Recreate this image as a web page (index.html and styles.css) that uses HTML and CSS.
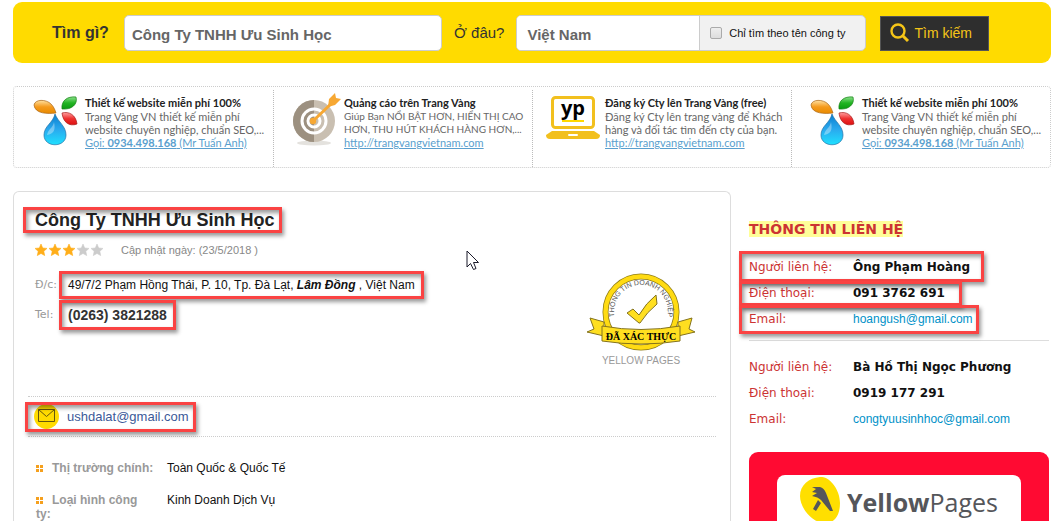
FILE: index.html
```html
<!DOCTYPE html>
<html lang="vi">
<head>
<meta charset="utf-8">
<meta name="viewport" content="width=device-width, initial-scale=1">
<title>Công Ty TNHH Ưu Sinh Học</title>
<link rel="stylesheet" href="styles.css">
</head>
<body>
<svg class="defs" aria-hidden="true">
  <defs>
    <linearGradient id="blue" x1="0" y1="0" x2="0" y2="1"><stop offset="0" stop-color="#0b7fd0"/><stop offset=".5" stop-color="#2aa9ee"/><stop offset="1" stop-color="#1fe0ff"/></linearGradient>
    <linearGradient id="orange" x1="0" y1="0" x2="0" y2="1"><stop offset="0" stop-color="#ffe0a0"/><stop offset=".5" stop-color="#f59a1c"/><stop offset="1" stop-color="#e88a00"/></linearGradient>
    <linearGradient id="green" x1="0" y1="0" x2="0" y2="1"><stop offset="0" stop-color="#8be08b"/><stop offset=".5" stop-color="#22b422"/><stop offset="1" stop-color="#0a9a12"/></linearGradient>
    <linearGradient id="red" x1="0" y1="0" x2="0" y2="1"><stop offset="0" stop-color="#ffa0a0"/><stop offset=".5" stop-color="#ee3030"/><stop offset="1" stop-color="#dd1010"/></linearGradient>
  </defs>
  <symbol id="drops" viewBox="0 0 46 52">
    <path d="M1 9C2 3 13 3 18 8C21 11 22 14 23 17C15 18 2 18 1 9Z" fill="url(#orange)" stroke="#a9671b" stroke-width=".7"/>
    <path d="M29 13C28 5 34 0 43 1C45 8 39 14 29 13Z" fill="url(#green)" stroke="#158015" stroke-width=".7"/>
    <path d="M29 17C36 15 43 19 44 28C36 31 30 26 29 17Z" fill="url(#red)" stroke="#a71b1b" stroke-width=".7"/>
    <path d="M22 18C25 26 33 30 33 39C33 52 11 52 11 39C11 30 20 27 22 18Z" fill="url(#blue)" stroke="#2371a6" stroke-width=".7"/>
    <path d="M21 26C20 32 15 33 14 39C20 38 23 35 21 26Z" fill="#fff" opacity=".35"/>
  </symbol>
  <symbol id="star" viewBox="0 0 12 12"><path d="M6 0L7.700 4L12 4.400L8.800 7.300L9.700 11.600L6 9.400L2.300 11.600L3.200 7.300L0 4.400L4.300 4Z" fill="currentColor" stroke="currentColor" stroke-width=".6"/></symbol>
</svg>

<form class="search">
  <label class="search-label search-label-bold" for="what">Tìm gì?</label>
  <input class="field field-what" id="what" type="text" value="Công Ty TNHH Ưu Sinh Học">
  <label class="search-label" for="where">Ở đâu?</label>
  <div class="where-group">
    <input class="field-where" id="where" type="text" value="Việt Nam">
    <label class="only-name"><input class="tick" type="checkbox">Chỉ tìm theo tên công ty</label>
  </div>
  <button class="search-button" type="submit">
    <svg width="20" height="20" viewBox="0 0 20 20" fill="none" stroke="#f5c518"><circle cx="8" cy="8" r="6.500" stroke-width="2.400"/><path d="M12.500 12.500L18 18" stroke-width="3"/></svg>
    Tìm kiếm
  </button>
</form>

<section class="ads">
  <article class="ad">
    <svg class="ad-icon" viewBox="0 0 46 52"><use href="#drops"/></svg>
    <div class="ad-text">
      <h2 class="ad-title">Thiết kế website miễn phí 100%</h2>
      <p class="ad-copy">Trang Vàng VN thiết kế miễn phí<br>website chuyên nghiệp, chuẩn SEO,...</p>
      <a class="ad-link" href="#">Gọi: <b>0934.498.168</b> (Mr Tuấn Anh)</a>
    </div>
  </article>
  <article class="ad">
    <svg class="ad-icon ad-icon-target" viewBox="0 0 50 54">
      <ellipse cx="22" cy="50" rx="17" ry="2.500" fill="#e4e2de"/>
      <circle cx="22" cy="28" r="21" fill="#c9bfb1"/><path d="M22 7A21 21 0 0 0 22 49Z" fill="#9c9080"/>
      <circle cx="22" cy="28" r="12" fill="none" stroke="#fff" stroke-width="3"/>
      <circle cx="22" cy="28" r="6" fill="none" stroke="#fff" stroke-width="3"/>
      <path d="M21 28L42 8" stroke="#f7a833" stroke-width="3"/><circle cx="21" cy="28" r="3.200" fill="#f7a833"/>
      <path d="M36 14L37 6L43 0L44 5L49 6L43 12L36 14Z" fill="#f7a833"/>
    </svg>
    <div class="ad-text">
      <h2 class="ad-title">Quảng cáo trên Trang Vàng</h2>
      <p class="ad-copy ad-copy-caps">Giúp Bạn NỔI BẬT HƠN, HIỂN THỊ CAO<br>HƠN, THU HÚT KHÁCH HÀNG HƠN,...</p>
      <a class="ad-link" href="#">http://trangvangvietnam.com</a>
    </div>
  </article>
  <article class="ad">
    <svg class="ad-icon ad-icon-laptop" viewBox="0 0 54 44">
      <rect x="6.500" y="1.500" width="41" height="30" rx="3" fill="#fff" stroke="#f2c01e" stroke-width="3"/>
      <path d="M0 39L6 35H48L54 39Q54 43 50 43H4Q0 43 0 39Z" fill="#f2c01e"/><rect x="22" y="38" width="10" height="2" rx="1" fill="#fff"/>
      <text class="laptop-text" x="27" y="19" text-anchor="middle">yp</text><path d="M16 25H38" stroke="#ffd800" stroke-width="2"/>
    </svg>
    <div class="ad-text">
      <h2 class="ad-title">Đăng ký Cty lên Trang Vàng (free)</h2>
      <p class="ad-copy">Đăng ký Cty lên trang vàng để Khách<br>hàng và đối tác tìm đến cty của bạn.</p>
      <a class="ad-link" href="#">http://trangvangvietnam.com</a>
    </div>
  </article>
  <article class="ad">
    <svg class="ad-icon" viewBox="0 0 46 52"><use href="#drops"/></svg>
    <div class="ad-text">
      <h2 class="ad-title">Thiết kế website miễn phí 100%</h2>
      <p class="ad-copy">Trang Vàng VN thiết kế miễn phí<br>website chuyên nghiệp, chuẩn SEO,...</p>
      <a class="ad-link" href="#">Gọi: <b>0934.498.168</b> (Mr Tuấn Anh)</a>
    </div>
  </article>
</section>

<main class="content">
  <section class="company">
    <div class="overview">
      <div class="details">
        <h1 class="name"><span class="mark mark-name">Công Ty TNHH Ưu Sinh Học</span></h1>
        <div class="rating">
          <span class="stars" role="img" aria-label="3/5">
            <svg class="star"><use href="#star"/></svg><svg class="star"><use href="#star"/></svg><svg class="star"><use href="#star"/></svg><svg class="star star-off"><use href="#star"/></svg><svg class="star star-off"><use href="#star"/></svg>
          </span>
          <span class="updated">Cập nhật ngày: (23/5/2018 )</span>
        </div>
        <dl class="facts">
          <dt class="fact-label">Đ/c:</dt>
          <dd class="fact"><span class="mark mark-fact">49/7/2 Phạm Hồng Thái, P. 10, Tp. Đà Lạt, <b><i>Lâm Đồng</i></b> , Việt Nam</span></dd>
          <dt class="fact-label">Tel:</dt>
          <dd class="fact fact-phone"><span class="mark mark-fact">(0263) 3821288</span></dd>
        </dl>
      </div>
      <figure class="badge">
        <svg width="110" height="80" viewBox="0 0 110 80">
          <circle cx="55" cy="39" r="35.500" fill="#fff" stroke="#8f7d18" stroke-width="6"/>
          <circle cx="55" cy="39" r="35.500" fill="none" stroke="#ffdb13" stroke-width="4.500"/>
          <path id="arc" d="M28.500 44A27 27 0 1 1 81.500 44" fill="none"/>
          <text class="arc-text"><textPath href="#arc" startOffset="50%" text-anchor="middle">THÔNG TIN DOANH NGHIỆP</textPath></text>
          <g fill="#ffdf20" stroke="#84731d">
            <path d="M18 49L4 45L8 56L1 59L18 63ZM92 49L106 45L103 56L109 59L92 63Z"/>
            <path d="M16 53Q55 60 94 53V68Q55 74 16 68Z"/>
            <path d="M41 40L47 36L53 42Q60 30 70 22L71 31Q61 39 54 50L53 50Z"/>
          </g>
          <text class="badge-text" x="55" y="67" text-anchor="middle">ĐÃ XÁC THỰC</text>
        </svg>
        <figcaption class="badge-caption">YELLOW PAGES</figcaption>
      </figure>
    </div>
    <div class="mail">
      <span class="mark mark-mail">
        <svg width="25" height="25" viewBox="0 0 25 25"><circle cx="12.500" cy="12.500" r="12.500" fill="#ffdb00"/><path d="M4.500 5.500H20.500V17.500H4.500ZM4.500 5.500L12.500 12.500L20.500 5.500" fill="none" stroke="#66570c"/></svg>
        <a class="mail-link" href="#">ushdalat@gmail.com</a>
      </span>
    </div>
    <table class="profile">
      <tr><th class="profile-label" scope="row"><span class="bullet"></span>Thị trường chính:</th><td class="profile-value">Toàn Quốc &amp; Quốc Tế</td></tr>
      <tr><th class="profile-label" scope="row"><span class="bullet"></span>Loại hình công ty:</th><td class="profile-value">Kinh Doanh Dịch Vụ</td></tr>
    </table>
    <svg class="cursor" width="14" height="21" viewBox="0 0 14 21"><path d="M1 1V17L4.500 13.500L7.500 19.500L10 18.500L7.500 12.500H12.500Z" fill="#fff" stroke="#1b1b2b"/></svg>
  </section>

  <aside class="side">
    <h2 class="side-title"><span class="highlight">THÔNG TIN LIÊN HỆ</span></h2>
    <dl class="contact">
      <div class="contact-row mark mark-person"><dt class="contact-label">Người liên hệ:</dt><dd class="contact-value">Ông Phạm Hoàng</dd></div>
      <div class="contact-row mark mark-phone"><dt class="contact-label">Điện thoại:</dt><dd class="contact-value">091 3762 691</dd></div>
      <div class="contact-row mark mark-email"><dt class="contact-label">Email:</dt><dd class="contact-value"><a class="contact-link" href="#">hoangush@gmail.com</a></dd></div>
    </dl>
    <dl class="contact contact-next">
      <div class="contact-row"><dt class="contact-label">Người liên hệ:</dt><dd class="contact-value">Bà Hồ Thị Ngọc Phương</dd></div>
      <div class="contact-row"><dt class="contact-label">Điện thoại:</dt><dd class="contact-value">0919 177 291</dd></div>
      <div class="contact-row"><dt class="contact-label">Email:</dt><dd class="contact-value"><a class="contact-link" href="#">congtyuusinhhoc@gmail.com</a></dd></div>
    </dl>
    <a class="banner" href="#">
      <span class="logo">
        <svg width="40" height="46" viewBox="0 0 40 46"><path d="M20 0C29 -1 40 12 40 26C40 38 35 46 25 46C12 46 0 31 0 19C0 8 9 1 20 0Z" fill="#ffdf00"/><path d="M12 10H20Q24 11 26 16L33 34H30L21 23Q18 20 12 19L17 16L12 15L16 12ZM18 23L21 26L16 34L13 32Z" fill="#55565a"/></svg>
        <span class="logo-text"><b>Yellow</b>Pages</span>
      </span>
    </a>
  </aside>
</main>
</body>
</html>
```
FILE: styles.css
```css
* { box-sizing: border-box; }
html { scrollbar-width: none; }
body {
  margin: 0;
  padding: 2px 12px 0 13px;
  background: #fff;
  color: #111;
  font: 12px/16px "Liberation Sans", Arial, sans-serif;
}
h1, h2, p, dl, dd, figure { margin: 0; }
a { text-decoration: none; }
.defs { position: absolute; width: 0; height: 0; }

/* Search bar */
.search {
  display: flex;
  align-items: center;
  padding: 13px 62px 12px 39px;
  background: #ffdb00;
  border-radius: 9px;
}
.search-label { color: #333; font-size: 15px; line-height: 20px; white-space: nowrap; }
.search-label-bold { font-size: 16px; font-weight: bold; }
.field, .field-where {
  min-width: 0;
  height: 36px;
  padding: 2px 7px 0;
  border: 1px solid #ccc;
  border-radius: 5px;
  background: #fff;
  color: #666;
  font: bold 15px "Liberation Sans", Arial, sans-serif;
}
.field-what { flex: 303; margin: 0 12px 0 15px; }
.where-group {
  flex: 349;
  display: flex;
  min-width: 0;
  height: 36px;
  margin: 0 14px 0 12px;
  border: 1px solid #ccc;
  border-radius: 5px;
  background: #f1f1f1;
  overflow: hidden;
}
.field-where {
  flex: 1;
  height: 100%;
  padding-left: 10px;
  border-width: 0 1px 0 0;
  border-radius: 0;
}
.only-name {
  display: flex;
  align-items: center;
  gap: 7px;
  padding: 0 20px 0 10px;
  font-size: 11px;
  white-space: nowrap;
}
.tick {
  appearance: none;
  width: 12px;
  height: 12px;
  margin: 0;
  border: 1px solid #aaa;
  border-radius: 2px;
  background: linear-gradient(#eee, #ddd);
}
.search-button {
  display: flex;
  align-items: center;
  gap: 4px;
  height: 35px;
  padding: 0 16px 0 9px;
  border: 1px solid #555;
  background: #2e2e2e;
  color: #f5c518;
  font: 14px "Liberation Sans", Arial, sans-serif;
  white-space: nowrap;
}

/* Promotions */
.ads {
  display: grid;
  grid-template-columns: repeat(4, minmax(0, 1fr));
  margin-top: 23px;
  padding-top: 3px;
  border: 1px dotted #ccc;
  border-radius: 4px;
}
.ad {
  display: flex;
  gap: 6px;
  height: 77px;
  padding: 6px 0 0 19px;
}
.ad + .ad { border-left: 1px dotted #bbb; padding-left: 18px; }
.ad-icon { flex: none; width: 46px; height: 52px; }
.ad .ad-icon-target { width: 50px; height: 54px; margin: -3px -4px 0 0; }
.ad .ad-icon-laptop { width: 54px; height: 44px; margin: 0 -1px 0 -5px; }
.ad-text {
  min-width: 0;
  color: #666;
  font: 11px/13px Lato, "Open Sans", sans-serif;
  white-space: nowrap;
}
.ad-title { color: #222; font-size: 11px; line-height: 14px; }
.ad-copy-caps { font-size: 10px; }
.ad-link { color: #5a9fce; text-decoration: underline; }
.laptop-text { font: bold 20px "Open Sans", sans-serif; }

/* Main columns */
.content {
  display: grid;
  grid-template-columns: minmax(0, 1fr) 302px;
  gap: 18px;
  margin-top: 23px;
}
.company {
  position: relative;
  padding: 0 14px;
  border: 1px solid #ddd;
  border-bottom: 0;
  border-radius: 6px 6px 0 0;
}
.overview { display: flex; justify-content: space-between; padding: 16px 20px 0 7px; height: 204px; }
.name { color: #222; font-size: 18px; line-height: 24px; }
.rating { display: flex; align-items: center; gap: 18px; margin-top: 10px; }
.stars { display: flex; gap: 2px; color: #ffae1a; }
.star { width: 12px; height: 12px; }
.star-off { color: #ccc; }
.updated { color: #888; font-size: 11px; }
.facts { display: grid; grid-template-columns: 33px auto; margin-top: 12px; }
.fact-label { color: #999; font: 11px/30px "DejaVu Sans", Verdana, sans-serif; }
.fact { line-height: 30px; }
.fact-phone { color: #333; font-size: 14px; font-weight: bold; }
.badge { padding-top: 65px; text-align: center; }
.badge svg { display: block; }
.badge-caption { color: #999; font-size: 10px; }
.arc-text { font: 7px "Liberation Sans", Arial, sans-serif; fill: #555; }
.badge-text { font: bold 10px "Liberation Serif", serif; }

.mail {
  display: flex;
  align-items: center;
  height: 41px;
  padding-left: 6px;
  border: dotted #ccc;
  border-width: 1px 0;
}
.mark-mail { display: flex; align-items: center; gap: 8px; }
.mail-link { color: #3b5998; font-size: 13px; }
.profile { margin: 16px 0 0 8px; border-collapse: collapse; }
.profile-label {
  width: 131px;
  padding: 8px 12px 0 0;
  color: #999;
  font-size: 12px;
  line-height: 14px;
  text-align: left;
  vertical-align: top;
}
.profile-value { height: 32px; padding: 8px 0 0; line-height: 14px; vertical-align: top; }
.bullet {
  display: inline-block;
  width: 7px;
  height: 7px;
  margin-right: 9px;
  background:
    linear-gradient(#fff, #fff) center / 1px 100% no-repeat,
    linear-gradient(#fff, #fff) center / 100% 1px no-repeat,
    #f5a01e;
}
.cursor { position: absolute; left: 452px; top: 58px; }

/* Contacts */
.side { padding: 28px 2px 0 0; }
.side-title { color: #c33; font: bold 14px/20px "DejaVu Sans", Verdana, sans-serif; }
.highlight { background: #ff9; }
.contact { margin-top: 15px; padding-bottom: 8px; border-bottom: 1px solid #ddd; font: 12px/26px "DejaVu Sans", Verdana, sans-serif; }
.contact-next { margin-top: 13px; border-bottom: 0; }
.contact-row { display: grid; grid-template-columns: 104px 1fr; }
.contact-label { color: #c33; }
.contact-value { color: #111; font-weight: bold; }
.contact-link { color: #0091c8; font: 12px "Liberation Sans", Arial, sans-serif; }
.banner { display: block; margin-top: 12px; padding: 23px 28px 20px; border-radius: 9px; background: #ff0a32; }
.logo { display: flex; gap: 7px; padding: 2px 0 8px 23px; border-radius: 8px; background: #fff; }
.logo-text { color: #55565a; font: 25px/50px "Open Sans", sans-serif; }

/* Red callout frames */
.mark { position: relative; }
.mark::after {
  content: "";
  position: absolute;
  inset: -5px -9px;
  border: 3px solid #fa4343;
  box-shadow: 2px 3px 4px rgba(0, 0, 0, .4), inset 2px 3px 4px rgba(0, 0, 0, .4);
  pointer-events: none;
}
.mark-name::after { inset: -3px -7px -3px -12px; }
.mark-fact::after { inset: -7px -9px; }
.mark-mail::after { inset: -2px -7px -3px -9px; }
.mark-person::after { inset: -3px 65px -2px -10px; }
.mark-phone::after { inset: 1px 87px 0 -10px; }
.mark-email::after { inset: -1px 70px -2px -10px; }
```
